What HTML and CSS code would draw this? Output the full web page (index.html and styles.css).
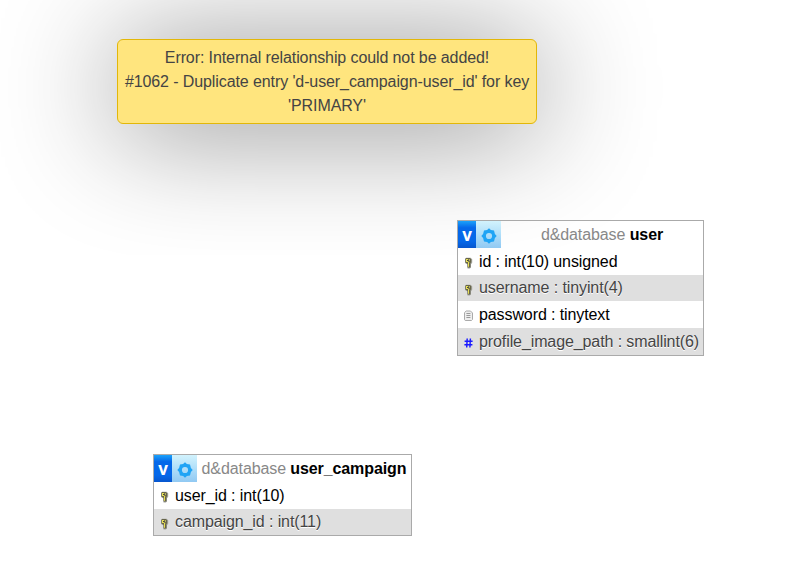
FILE: index.html
```html
<!DOCTYPE html>
<html lang="en">
<head>
<meta charset="utf-8">
<title>Designer</title>
<link rel="stylesheet" href="styles.css">
</head>
<body>
<svg class="defs" aria-hidden="true">
  <defs>
    <symbol id="gear" viewBox="0 0 16 16">
      <path fill-rule="evenodd" d="M8 0.3 9.9 2 13 2.6 13.9 6 15.7 8 13.9 10 13 13.4 9.9 14 8 15.7 6.1 14 3 13.4 2.1 10 .3 8 2.1 6 3 2.6 6.1 2ZM8 4.9A3.1 3.1 0 1 0 8 11.1 3.1 3.1 0 1 0 8 4.9Z"/>
    </symbol>
    <symbol id="key" viewBox="0 0 9 12">
      <path d="M2 .7h4.6L8.2 2.3v3.4L7 7.2v3.4L5.8 11.6H3.5V7.4L1 6V2Z" fill="#a3a39c"/>
      <path d="M2 1h3.8l1.4 1.3v2.9L6.3 6.3v4.3H3.5V6.8L1.4 5.6V2Z" fill="#67654a"/>
      <path d="M2 2h2v3H2zM4 4.8h1.2v5H4z" fill="#e8e056"/>
      <path d="M4.8 2h1v2h-1z" fill="#c9c464"/>
      <path d="M3 3h1.6v1H3zM5.2 6.6h1v1h-1zM5.2 8.6h1v1h-1z" fill="#44443a"/>
    </symbol>
    <symbol id="text" viewBox="0 0 9 12">
      <path d="M2.2 1h4.3L8.5 3v6.5l-1 1H1.2L.5 9.8V2.6Z" fill="#eee" stroke="#aaa"/>
      <path d="M2.4 3.5h4M2.4 5.5h4M2.4 7.5h4" stroke="#999" fill="none"/>
    </symbol>
    <symbol id="number" viewBox="0 0 9 12">
      <path d="M3.2 1.5 2.7 10.5M6.4 1.5 5.9 10.5M.6 4.3h8M.4 7.7h8" stroke="#1a1aff" stroke-width="1.45" fill="none"/>
    </symbol>
  </defs>
</svg>
<main class="canvas">
  <section class="table table-user">
    <header class="head">
      <span class="toggle">v</span>
      <span class="options"><svg><use href="#gear"/></svg></span>
      <h2 class="name"><span class="db">d&amp;database</span> user</h2>
    </header>
    <div class="row"><svg class="icon"><use href="#key"/></svg>id : int(10) unsigned</div>
    <div class="row shaded"><svg class="icon"><use href="#key"/></svg>username : tinyint(4)</div>
    <div class="row"><svg class="icon"><use href="#text"/></svg>password : tinytext</div>
    <div class="row shaded"><svg class="icon"><use href="#number"/></svg>profile_image_path : smallint(6)</div>
  </section>
  <section class="table table-campaign">
    <header class="head">
      <span class="toggle">v</span>
      <span class="options"><svg><use href="#gear"/></svg></span>
      <h2 class="name"><span class="db">d&amp;database</span> user_campaign</h2>
    </header>
    <div class="row"><svg class="icon"><use href="#key"/></svg>user_id : int(10)</div>
    <div class="row shaded"><svg class="icon"><use href="#key"/></svg>campaign_id : int(11)</div>
  </section>
  <div class="notice">Error: Internal relationship could not be added!<br>#1062 - Duplicate entry 'd-user_campaign-user_id' for key<br>'PRIMARY'</div>
</main>
</body>
</html>
```
FILE: styles.css
```css
* { box-sizing: border-box; }
body {
  margin: 0;
  background: #fff;
  font: 16px/24px "Liberation Sans", Arial, sans-serif;
  letter-spacing: -0.1px;
  color: #000;
}
.defs { position: absolute; width: 0; height: 0; }
.canvas {
  position: relative;
  height: 578px;
  overflow: hidden;
  isolation: isolate;
}
.notice {
  position: absolute;
  z-index: -1;
  left: 117px;
  top: 39px;
  width: 420px;
  height: 85px;
  padding-top: 6px;
  border: 1px solid #e2b709;
  border-radius: 6px;
  background: #ffe57e;
  box-shadow: 0 6px 120px #888;
  color: #444;
  text-align: center;
  white-space: nowrap;
}
.table {
  position: absolute;
  border: 1px solid #aaa;
}
.table-user { left: 457px; top: 220px; width: 247px; height: 136px; }
.table-campaign { left: 153px; top: 454px; width: 259px; height: 82px; }
.head { display: flex; height: 27px; }
.toggle {
  width: 18px;
  background: linear-gradient(#1ba2fa 0, #0568e9 25%, #0568e9 75%, #0756ce);
  color: #fff;
  font: bold 17px/27px "Open Sans", sans-serif;
  text-align: center;
}
.options {
  display: flex;
  align-items: center;
  justify-content: center;
  width: 25px;
  padding-top: 3px;
  background: linear-gradient(#d2f3fd, #acdcf9 55%, #91c9f3);
}
.options svg { width: 16px; height: 16px; fill: #20a4f5; }
.name {
  flex: 1;
  margin: 0;
  font-size: 16px;
  line-height: 27px;
  text-align: center;
  white-space: nowrap;
}
.db { color: #888; font-weight: normal; }
.row {
  display: flex;
  align-items: center;
  height: 27px;
  padding-left: 6px;
  white-space: nowrap;
}
.row:nth-child(odd) { height: 26px; }
.table-user .row:last-child { height: 27px; }
.table-campaign .row:nth-child(2) { height: 27px; }
.shaded {
  background: #dfdfdf;
  color: #444;
  text-shadow: 0 1px 0 #fff;
}
.icon { flex: none; width: 9px; height: 12px; margin: 3px 6px 0 0; }
```
